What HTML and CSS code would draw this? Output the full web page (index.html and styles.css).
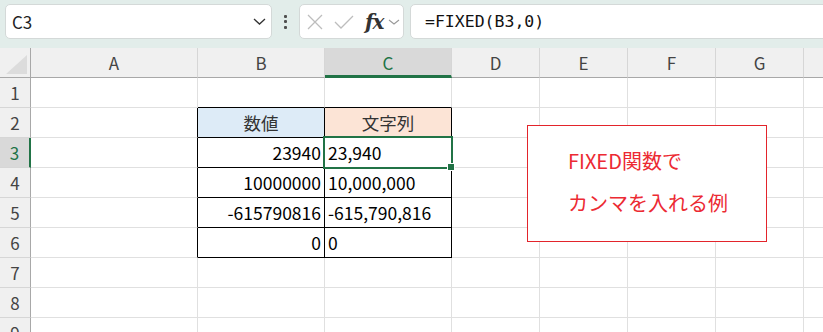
FILE: index.html
```html
<!DOCTYPE html>
<html lang="ja">
<head>
<meta charset="utf-8">
<title>FIXED</title>
<link rel="stylesheet" href="styles.css">
</head>
<body>
<div class="app">
  <div class="toolbar">
    <div class="namebox">
      <span class="nb-text">C3</span>
      <svg class="chev" width="13" height="7" viewBox="0 0 13 7"><path d="M1 1 L6.5 6 L12 1" fill="none" stroke="#333" stroke-width="1.3"/></svg>
    </div>
    <div class="dots"><span></span><span></span><span></span></div>
    <div class="fxbox">
      <svg width="16" height="16" viewBox="0 0 16 16"><path d="M1 1 L15 15 M15 1 L1 15" stroke="#bdbdbd" stroke-width="1.3" fill="none"/></svg>
      <svg width="20" height="14" viewBox="0 0 20 14"><path d="M1 7 L7 13 L19 1" stroke="#bdbdbd" stroke-width="1.3" fill="none"/></svg>
      <span class="fx">fx</span>
      <svg width="12" height="6" viewBox="0 0 12 6"><path d="M1 1 L6 5 L11 1" fill="none" stroke="#999" stroke-width="1.1"/></svg>
    </div>
    <div class="formula">=FIXED(B3,0)</div>
  </div>
  <div class="sheetwrap">
    <div class="sheet">
      <div class="corner"><svg width="31" height="30" viewBox="0 0 31 30"><path d="M27 7 L27 26 L6 26 Z" fill="#dcdcdc"/></svg></div>
      <div class="ch">A</div><div class="ch">B</div><div class="ch sel">C</div><div class="ch">D</div><div class="ch">E</div><div class="ch">F</div><div class="ch">G</div><div class="ch"></div>

      <div class="rh">1</div><div class="c"></div><div class="c tb"></div><div class="c tb"></div><div class="c"></div><div class="c"></div><div class="c"></div><div class="c"></div><div class="c"></div>

      <div class="rh">2</div><div class="c tl"></div><div class="c t hb">数値</div><div class="c t hc">文字列</div><div class="c"></div><div class="c"></div><div class="c"></div><div class="c"></div><div class="c"></div>

      <div class="rh sel">3</div><div class="c tl"></div><div class="c t num">23940</div><div class="c t txt active">23,940</div><div class="c"></div><div class="c"></div><div class="c"></div><div class="c"></div><div class="c"></div>

      <div class="rh">4</div><div class="c tl"></div><div class="c t num">10000000</div><div class="c t txt">10,000,000</div><div class="c"></div><div class="c"></div><div class="c"></div><div class="c"></div><div class="c"></div>

      <div class="rh">5</div><div class="c tl"></div><div class="c t num">-615790816</div><div class="c t txt">-615,790,816</div><div class="c"></div><div class="c"></div><div class="c"></div><div class="c"></div><div class="c"></div>

      <div class="rh">6</div><div class="c tl"></div><div class="c t num">0</div><div class="c t txt">0</div><div class="c"></div><div class="c"></div><div class="c"></div><div class="c"></div><div class="c"></div>

      <div class="rh">7</div><div class="c"></div><div class="c"></div><div class="c"></div><div class="c"></div><div class="c"></div><div class="c"></div><div class="c"></div><div class="c"></div>

      <div class="rh">8</div><div class="c"></div><div class="c"></div><div class="c"></div><div class="c"></div><div class="c"></div><div class="c"></div><div class="c"></div><div class="c"></div>

      <div class="rh">9</div><div class="c"></div><div class="c"></div><div class="c"></div><div class="c"></div><div class="c"></div><div class="c"></div><div class="c"></div><div class="c"></div>
    </div>
    <div class="note">
      <div>FIXED関数で</div>
      <div>カンマを入れる例</div>
    </div>
  </div>
</div>
</body>
</html>
```

FILE: styles.css
```css
* { box-sizing: border-box; }
html, body { margin: 0; padding: 0; }
body {
  width: 823px;
  height: 332px;
  overflow: hidden;
  background: #fff;
  font-family: "Noto Sans CJK JP", "Noto Sans", sans-serif;
  color: #000;
}
.app { width: 823px; height: 332px; overflow: hidden; }

.toolbar {
  height: 48px;
  background: #e2edea;
  display: flex;
  align-items: flex-start;
  padding: 4px 0 0 5px;
}
.toolbar > * { flex-shrink: 0; }
.namebox {
  width: 267px;
  height: 35px;
  background: #fff;
  border: 1px solid #d4d9d8;
  border-radius: 5px;
  display: flex;
  align-items: center;
  justify-content: space-between;
  padding: 0 5px 0 6px;
}
.nb-text { font-size: 17px; color: #222; }
.chev { display: block; }
.dots {
  width: 27px;
  height: 35px;
  display: flex;
  flex-direction: column;
  align-items: center;
  justify-content: center;
  gap: 2.5px;
}
.dots span {
  width: 3px;
  height: 3px;
  background: #505050;
  border-radius: 1px;
}
.fxbox {
  width: 105px;
  height: 35px;
  background: #fff;
  border: 1px solid #d4d9d8;
  border-radius: 5px;
  display: flex;
  align-items: center;
  padding: 0 0 0 7px;
}
.fxbox svg:nth-child(1) { margin-right: 11px; }
.fxbox svg:nth-child(2) { margin-right: 11px; }
.fx {
  font-family: "DejaVu Serif", "Liberation Serif", serif;
  font-style: italic;
  font-weight: bold;
  font-size: 20px;
  color: #333;
  margin-right: 4px;
  line-height: 1;
  letter-spacing: -1px;
}
.formula {
  margin-left: 6px;
  width: 440px;
  height: 35px;
  background: #fff;
  border: 1px solid #d4d9d8;
  border-radius: 5px;
  font-family: "DejaVu Sans Mono", "Liberation Mono", monospace;
  font-size: 16.5px;
  line-height: 33px;
  padding-left: 14px;
  color: #111;
}

.sheetwrap { position: relative; }
.sheet {
  display: grid;
  grid-template-columns: 31px 167px 127px 127px 88px 88px 88px 88px 20px;
  grid-template-rows: 30px repeat(9, 30px);
}
.corner {
  background: #f0f0f0;
  border-right: 1px solid #a8a8a8;
  border-bottom: 1px solid #a8a8a8;
}
.corner svg { display: block; }
.ch {
  background: #f0f0f0;
  border-right: 1px solid #d6d6d6;
  border-bottom: 1px solid #a8a8a8;
  display: flex;
  align-items: center;
  justify-content: center;
  font-size: 17px;
  color: #444;
}
.ch.sel {
  background: #d9d9d9;
  border-bottom: 3px solid #217346;
  color: #217346;
  padding-top: 2px;
}
.rh {
  background: #f0f0f0;
  border-right: 1px solid #a8a8a8;
  border-bottom: 1px solid #d6d6d6;
  display: flex;
  align-items: center;
  justify-content: center;
  font-size: 17px;
  color: #444;
}
.rh.sel {
  background: #d9d9d9;
  border-right: 2px solid #217346;
  color: #217346;
}
.c {
  border-right: 1px solid #e0e0e0;
  border-bottom: 1px solid #e0e0e0;
  font-size: 17.5px;
  display: flex;
  align-items: center;
  white-space: nowrap;
}
.c.tb { border-bottom-color: #000; }
.c.tl { border-right-color: #000; }
.c.t { border-right-color: #000; border-bottom-color: #000; }
.hb { background: #ddebf7; justify-content: center; color: #333; }
.hc { background: #fce4d6; justify-content: center; color: #333; }
.num { justify-content: flex-end; padding-right: 3px; }
.txt { padding-left: 3px; }
.active { position: relative; }
.active::after {
  content: "";
  position: absolute;
  left: -2px;
  top: -2px;
  right: -2px;
  bottom: -2px;
  border: 2px solid #217346;
}
.active::before {
  content: "";
  position: absolute;
  right: -4px;
  bottom: -4px;
  width: 6px;
  height: 6px;
  background: #217346;
  border: 1px solid #fff;
  z-index: 2;
}

.note {
  position: absolute;
  left: 527px;
  top: 77px;
  width: 240px;
  height: 117px;
  background: #fff;
  border: 1px solid #e3242b;
  color: #ec2a33;
  font-size: 20px;
  line-height: 42px;
  padding: 14px 0 0 40px;
}
```
